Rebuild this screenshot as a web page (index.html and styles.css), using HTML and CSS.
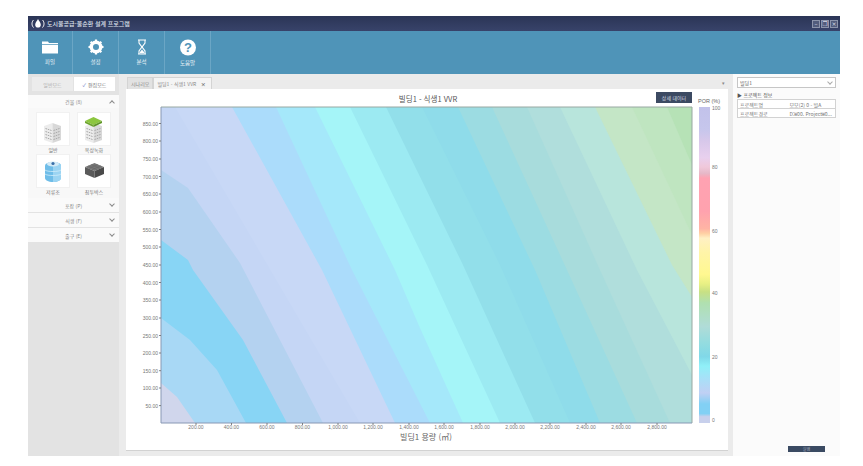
FILE: index.html
```html
<!DOCTYPE html>
<html lang="ko">
<head>
<meta charset="utf-8">
<title>도시물공급-물순환 설계 프로그램</title>
<link rel="stylesheet" href="styles.css">
</head>
<body>
<svg class="defs" width="0" height="0" aria-hidden="true">
  <defs>
    <g id="tower">
      <polygon points="15.500,10 7,13 7,27 15.500,30" fill="#ececec"/>
      <polygon points="15.500,10 24,13 24,27 15.500,30" fill="#d8d8d8"/>
      <g stroke="#ababab" stroke-width="1" stroke-dasharray="1.600 .8" fill="none">
        <path d="M8.500 15.500l6 2M8.500 18.500l6 2M8.500 21.500l6 2M8.500 24.500l6 2"/>
        <path d="M16.500 17.500l6-2M16.500 20.500l6-2M16.500 23.500l6-2M16.500 26.500l6-2"/>
      </g>
    </g>
    <linearGradient id="porScale" x1="0" y1="0" x2="0" y2="1">
      <stop offset="0" stop-color="#c2c2ea"/>
      <stop offset=".07" stop-color="#c6c6ec"/>
      <stop offset=".11" stop-color="#d8c8ea"/>
      <stop offset=".16" stop-color="#e8d0ee"/>
      <stop offset=".19" stop-color="#f0c8da"/>
      <stop offset=".21" stop-color="#e6b8c8"/>
      <stop offset=".225" stop-color="#ffa2b2"/>
      <stop offset=".33" stop-color="#ffa2ae"/>
      <stop offset=".385" stop-color="#ffb4a4"/>
      <stop offset=".4" stop-color="#ffd0a4"/>
      <stop offset=".415" stop-color="#fff0c4"/>
      <stop offset=".46" stop-color="#fff4a8"/>
      <stop offset=".53" stop-color="#fff890"/>
      <stop offset=".56" stop-color="#e8f084"/>
      <stop offset=".585" stop-color="#c8e084"/>
      <stop offset=".62" stop-color="#b0e0b0"/>
      <stop offset=".695" stop-color="#b0dcd8"/>
      <stop offset=".75" stop-color="#92dce0"/>
      <stop offset=".79" stop-color="#80d8e8"/>
      <stop offset=".82" stop-color="#90f0f8"/>
      <stop offset=".86" stop-color="#a8e0f8"/>
      <stop offset=".905" stop-color="#c0d0f4"/>
      <stop offset=".94" stop-color="#82d0f4"/>
      <stop offset=".97" stop-color="#82d0f4"/>
      <stop offset=".98" stop-color="#c8d0ec"/>
      <stop offset="1" stop-color="#c8d0ec"/>
    </linearGradient>
  </defs>
</svg>

<div class="window">
  <header class="titlebar">
    <svg class="logo" width="14" height="11" viewBox="0 0 14 11">
      <path d="M7 1C6 3 4.200 4.500 4.200 6.800A2.800 2.800 0 0 0 9.800 6.800C9.800 4.500 8 3 7 1Z" fill="#fff"/>
      <path d="M2.500 2C.5 4 .5 7.500 2.500 9.500M11.500 2C13.500 4 13.500 7.500 11.500 9.500" fill="none" stroke="#fff" stroke-width="1"/>
    </svg>
    <span class="app-name">도시물공급-물순환 설계 프로그램</span>
    <div class="win-controls">
      <span class="win-btn">–</span><span class="win-btn">❐</span><span class="win-btn">×</span>
    </div>
  </header>

  <nav class="ribbon">
    <div class="rib-btn rib-first">
      <svg width="18" height="16" viewBox="0 0 18 16"><path d="M1 2.500h6l1 1.500h9v1.200H1Z" fill="#fff"/><path d="M1 6h16v8.500H1Z" fill="#fff"/></svg>
      <span>파일</span>
    </div>
    <div class="rib-btn">
      <svg width="18" height="16" viewBox="0 0 18 16"><circle cx="9" cy="8" r="4.800" fill="none" stroke="#fff" stroke-width="3.400"/><path d="M9 8V.3M9 8V15.700M9 8H1.500M9 8H16.500M9 8L3.700 2.700M9 8L14.300 2.700M9 8L3.700 13.300M9 8L14.300 13.300" stroke="#fff" stroke-width="2.200" stroke-dasharray="7.600 9"/><circle cx="9" cy="8" r="3" fill="#4f94b8"/></svg>
      <span>설정</span>
    </div>
    <div class="rib-btn">
      <svg width="18" height="16" viewBox="0 0 18 16"><path d="M5 1h8M5 15h8M6 1.500v2.500l3 4 3-4V1.500M6 14.500V12l3-4 3 4v2.500" fill="none" stroke="#fff" stroke-width="1.100"/><path d="M7 13l2-2.500 2 2.500v1.300H7Z" fill="#fff"/></svg>
      <span>분석</span>
    </div>
    <div class="rib-btn">
      <svg width="18" height="17" viewBox="0 0 18 17"><circle cx="9" cy="8.500" r="8" fill="#fff"/><text x="9" y="13" text-anchor="middle" class="q-mark">?</text></svg>
      <span>도움말</span>
    </div>
  </nav>

  <div class="workspace">
    <aside class="left">
      <div class="mode-tabs">
        <span class="mode mode-off">일반모드</span>
        <span class="mode mode-on"><b class="check">✓</b> 편집모드</span>
      </div>
      <div class="acc-head acc-first"><span>건물 (8)</span><i class="chev chev-up"></i></div>
      <div class="thumbs">
        <figure class="thumb">
          <div class="thumb-box"><svg width="32" height="32" viewBox="0 0 32 32"><use href="#tower"/></svg></div>
          <figcaption>일반</figcaption>
        </figure>
        <figure class="thumb">
          <div class="thumb-box"><svg width="32" height="32" viewBox="0 0 32 32"><use href="#tower"/><polygon points="15.500,4 7,8 15.500,12 24,8" fill="#8cc63f"/><polygon points="7,8 15.500,12 15.500,14 7,10" fill="#6ea52e"/><polygon points="24,8 15.500,12 15.500,14 24,10" fill="#5f9526"/></svg></div>
          <figcaption>옥상녹화</figcaption>
        </figure>
        <figure class="thumb">
          <div class="thumb-box"><svg width="32" height="32" viewBox="0 0 32 32"><path d="M8 11c0-3 4-4 8-4s8 1 8 4v12c0 2-3 4-8 4s-8-2-8-4Z" fill="#6fbde8"/><path d="M16 7c4 0 8 1 8 4v12c0 2-3 4-8 4Z" fill="#9bd4f2"/><path d="M8 15c2 2 14 2 16 0M8 19c2 2 14 2 16 0" fill="none" stroke="#cfecfa" stroke-width=".8"/><ellipse cx="16" cy="9" rx="6" ry="2.500" fill="#d4eaf6"/><circle cx="16" cy="8.500" r="1.600" fill="#3a6fa8"/></svg></div>
          <figcaption>저류조</figcaption>
        </figure>
        <figure class="thumb">
          <div class="thumb-box"><svg width="32" height="32" viewBox="0 0 32 32"><polygon points="16.500,8 7,12 16.500,16 26,12" fill="#777"/><polygon points="7,12 16.500,16 16.500,23 7,19" fill="#5a5a5a"/><polygon points="26,12 16.500,16 16.500,23 26,19" fill="#4a4a4a"/><path d="M10 10.800l9.500 4M13 9.500l9.500 4M23 10.800L13.500 14.800M20 9.500L10.500 13.500" stroke="#636363" stroke-width=".5"/></svg></div>
          <figcaption>침투박스</figcaption>
        </figure>
      </div>
      <div class="acc-head"><span>포장 (P)</span><i class="chev"></i></div>
      <div class="acc-head"><span>식생 (F)</span><i class="chev"></i></div>
      <div class="acc-head"><span>출구 (E)</span><i class="chev"></i></div>
    </aside>

    <main class="center">
      <div class="doc-tabs">
        <span class="doc-tab">시나리오</span>
        <span class="doc-tab doc-tab-on">빌딩1 - 식생1 VVR <b class="close">×</b></span>
        <span class="tab-menu">▾</span>
      </div>
      <section class="pane">
        <button class="detail-btn" type="button">상세 데이터</button>
        <svg class="chart" width="602" height="362" viewBox="126 89 602 362">
          <text class="c-title" x="428" y="102" text-anchor="middle">빌딩1 - 식생1 VVR</text>

          <rect x="161" y="107" width="531" height="316" fill="#d0d6ec"/>
          <polygon fill="#a8d8f5" points="161,383 177,397 195,423 692,423 692,107 161,107"/>
          <polygon fill="#88d5f5" points="161,318 190,340 217,370 246,423 692,423 692,107 161,107"/>
          <polygon fill="#b4d2f0" points="161,240 188,260 193,270 243,340 287,423 692,423 692,107 161,107"/>
          <polygon fill="#c5d6f5" points="161,170 188,188 240,263 323,423 692,423 692,107 161,107"/>
          <polygon fill="#c8d8f6" points="175,107 360,423 692,423 692,107"/>
          <polygon fill="#abdcfb" points="232,107 322,270 395,423 692,423 692,107"/>
          <polygon fill="#a5e8fa" points="276,107 352,270 430,423 692,423 692,107"/>
          <polygon fill="#a5f5f8" points="315,107 395,270 420,328 463,423 692,423 692,107"/>
          <polygon fill="#9ceaf2" points="350,107 427,265 500,423 692,423 692,107"/>
          <polygon fill="#92dfea" points="386,107 463,265 535,423 692,423 692,107"/>
          <polygon fill="#8fdcea" points="422,107 500,265 570,423 692,423 692,107"/>
          <polygon fill="#9cdce2" points="458,107 535,270 600,423 692,423 692,107"/>
          <polygon fill="#a8dcdc" points="492,107 567,270 637,423 692,423 692,107"/>
          <polygon fill="#b0dedc" points="527,107 600,270 670,423 692,423 692,107"/>
          <polygon fill="#b8e5dc" points="560,107 637,270 692,375 692,107"/>
          <polygon fill="#c4e6c6" points="595,107 672,265 692,297 692,107"/>
          <polygon fill="#bfe5c0" points="632,107 692,235 692,107"/>
          <polygon fill="#b6e2b6" points="667,107 692,165 692,107"/>

          <path class="axis-x" d="M161 107H692V423"/>
          <path class="axis-l" d="M161 107V423H692"/>

          <g class="ticks">
            <path d="M159 123.500h2M159 141h2M159 159h2M159 176.500h2M159 194h2M159 212h2M159 229.500h2M159 247h2M159 265h2M159 282.500h2M159 300h2M159 318h2M159 335.500h2M159 353h2M159 370.700h2M159 388h2M159 405.600h2"/>
            <path d="M196 423v2M231.500 423v2M267 423v2M302.500 423v2M338 423v2M373 423v2M409 423v2M444 423v2M480 423v2M515 423v2M550 423v2M586 423v2M621 423v2M657 423v2"/>
          </g>
          <g class="y-labels" text-anchor="end">
            <text x="158" y="125.500">850.00</text><text x="158" y="143">800.00</text><text x="158" y="161">750.00</text><text x="158" y="178.500">700.00</text><text x="158" y="196">650.00</text><text x="158" y="214">600.00</text><text x="158" y="231.500">550.00</text><text x="158" y="249">500.00</text><text x="158" y="267">450.00</text><text x="158" y="284.500">400.00</text><text x="158" y="302">350.00</text><text x="158" y="320">300.00</text><text x="158" y="337.500">250.00</text><text x="158" y="355">200.00</text><text x="158" y="372.700">150.00</text><text x="158" y="390">100.00</text><text x="158" y="407.600">50.00</text>
          </g>
          <g class="x-labels" text-anchor="middle">
            <text x="196" y="429">200.00</text><text x="231.500" y="429">400.00</text><text x="267" y="429">600.00</text><text x="302.500" y="429">800.00</text><text x="338" y="429">1,000.00</text><text x="373" y="429">1,200.00</text><text x="409" y="429">1,400.00</text><text x="444" y="429">1,600.00</text><text x="480" y="429">1,800.00</text><text x="515" y="429">2,000.00</text><text x="550" y="429">2,200.00</text><text x="586" y="429">2,400.00</text><text x="621" y="429">2,600.00</text><text x="657" y="429">2,800.00</text>
          </g>
          <text class="c-axis" x="426" y="440" text-anchor="middle">빌딩1 용량 (㎥)</text>

          <text class="c-por" x="698" y="103">POR (%)</text>
          <rect x="699" y="107" width="11" height="316" fill="url(#porScale)"/>
          <g class="scale-labels">
            <text x="712" y="110">100</text><text x="712" y="169">80</text><text x="712" y="233">60</text><text x="712" y="295">40</text><text x="712" y="359">20</text><text x="712" y="422">0</text>
          </g>
        </svg>
      </section>
    </main>

    <aside class="right">
      <div class="select"><span>빌딩1</span><i class="chev chev-thin"></i></div>
      <div class="info-title">▶ 프로젝트 정보</div>
      <table class="info">
        <tr><td class="k">프로젝트명</td><td>모모(2) 0 - 빌A</td></tr>
        <tr><td class="k">프로젝트경로</td><td>D:₩00. Project₩0...</td></tr>
      </table>
      <button class="run-btn" type="button">실행</button>
    </aside>
  </div>
</div>
</body>
</html>
```

FILE: styles.css
```css
* { box-sizing: border-box; }
html, body { margin: 0; padding: 0; background: #fff; }
body {
  width: 863px;
  height: 466px;
  overflow: hidden;
  padding: 16px 0 0 28px;
  font-family: "Noto Sans CJK KR", "Noto Sans", sans-serif;
  color: #666;
}
.defs { display: block; height: 0; }

.window {
  width: 812px;
  height: 440px;
  display: flex;
  flex-direction: column;
}

.titlebar {
  height: 15px;
  flex: none;
  display: flex;
  align-items: center;
  padding: 0 2px 0 3px;
  background: linear-gradient(#2b3556, #38436a);
  color: #dfe3ec;
}
.logo { flex: none; margin-right: 2px; }
.app-name { font-size: 6px; line-height: 1; font-weight: 500; }
.win-controls { margin-left: auto; display: flex; gap: 1px; }
.win-btn {
  width: 8px;
  height: 8px;
  border: 1px solid #8c94ab;
  background: #525c7c;
  color: #d8dbe6;
  font-size: 6px;
  line-height: 6px;
  text-align: center;
  overflow: hidden;
  font-family: "DejaVu Sans", sans-serif;
}

.ribbon {
  height: 43px;
  flex: none;
  display: flex;
  background: #4f94b8;
}
.rib-btn {
  width: 46px;
  flex: none;
  display: flex;
  flex-direction: column;
  align-items: center;
  padding-top: 8px;
  gap: 3px;
  border-right: 1px solid #6ba6c5;
  color: #e8f1f6;
  font-size: 5.500px;
  line-height: 9px;
}
.rib-first { width: 45px; }
.q-mark { font: 700 13px "Liberation Sans", sans-serif; fill: #4f94b8; }

.workspace {
  flex: 1;
  min-height: 0;
  display: flex;
}

.left {
  width: 91px;
  flex: none;
  background: #e3e3e3;
  padding-top: 3px;
  display: flex;
  flex-direction: column;
  font-size: 5px;
}
.mode-tabs {
  display: flex;
  height: 14px;
  margin: 0 4px 4px;
  gap: 1px;
}
.mode {
  flex: 1;
  display: flex;
  align-items: center;
  justify-content: center;
  gap: 2px;
  line-height: 1;
}
.mode-off { background: #ececec; color: #b0b0b0; }
.mode-on { background: #fff; color: #777; }
.check { color: #5a70b8; font-weight: 400; }

.acc-head {
  height: 14px;
  flex: none;
  margin-bottom: 1px;
  background: #fafafa;
  display: flex;
  align-items: center;
  justify-content: center;
  position: relative;
  color: #888;
  line-height: 1;
}
.acc-first { height: 13px; margin-bottom: 0; }
.chev {
  position: absolute;
  right: 5px;
  top: 50%;
  width: 4px;
  height: 4px;
  margin-top: -3px;
  border-right: 1px solid #8a8a8a;
  border-bottom: 1px solid #8a8a8a;
  transform: rotate(45deg);
}
.chev-up { margin-top: -1px; transform: rotate(225deg); }
.chev-thin { border-color: #aaa; right: 3px; }

.thumbs {
  display: grid;
  grid-template-columns: 32px 32px;
  column-gap: 9px;
  padding: 5px 0 0 9px;
  height: 90px;
  align-content: start;
  background: #f8f8f8;
  margin-bottom: 0;
}
.thumb { margin: 0; }
.thumb-box {
  width: 32px;
  height: 32px;
  background: #fff;
  box-shadow: 0 0 0 1px #f1f1f1;
}
.thumb-box svg { display: block; }
.thumb figcaption {
  height: 10px;
  text-align: center;
  line-height: 10px;
  color: #777;
  white-space: nowrap;
}

.center {
  width: 614px;
  flex: none;
  background: #ebebeb;
  padding: 3px 5px 5px 7px;
  display: flex;
  flex-direction: column;
}
.doc-tabs {
  height: 12px;
  flex: none;
  display: flex;
  align-items: stretch;
  padding-left: 1px;
  font-size: 5px;
  line-height: 11px;
}
.doc-tab {
  padding: 0 3px;
  background: #e2e2e2;
  border: 1px solid #d4d4d4;
  border-bottom: 0;
  color: #888;
  white-space: nowrap;
}
.doc-tab-on { width: 59px; background: #f4f4f4; }
.close { margin-left: 3px; color: #666; }
.tab-menu { margin-left: auto; margin-right: 3px; color: #888; }

.pane {
  flex: 1;
  min-height: 0;
  background: #fff;
  position: relative;
  border-bottom: 1px solid #d2d2d2;
}
.chart { display: block; }
.detail-btn {
  position: absolute;
  left: 530px;
  top: 3px;
  width: 36px;
  height: 11px;
  padding: 0;
  border: 0;
  background: #3c4a62;
  color: #d6dae2;
  font: 5px/11px "Noto Sans CJK KR", sans-serif;
}

.c-title { font: 400 7.500px "Noto Sans CJK KR", sans-serif; fill: #555; }
.c-axis { font: 8px "Noto Sans CJK KR", sans-serif; fill: #666; }
.c-por { font: 5.500px "Liberation Sans", sans-serif; fill: #666; }
.axis-x { fill: none; stroke: #98a8a2; stroke-width: 1; }
.axis-l { fill: none; stroke: #8898b4; stroke-width: 1; }
.ticks path { stroke: #666; stroke-width: .8; fill: none; }
.y-labels text, .x-labels text, .scale-labels text {
  font: 5px "Liberation Sans", sans-serif;
  fill: #777;
}

.right {
  width: 107px;
  flex: none;
  background: #fbfbfb;
  padding: 3px 4px 4px 4px;
  display: flex;
  flex-direction: column;
  font-size: 5px;
}
.select {
  height: 11px;
  width: 99px;
  flex: none;
  position: relative;
  background: #fff;
  border: 1px solid #c6c6c6;
  padding-left: 2px;
  line-height: 9px;
  color: #666;
}
.info-title {
  margin-top: 3px;
  height: 8px;
  line-height: 8px;
  font-weight: 400;
  color: #555;
}
.info {
  width: 99px;
  border-collapse: collapse;
  table-layout: fixed;
  background: #fff;
  color: #777;
}
.info td {
  height: 9px;
  padding: 0 0 0 2px;
  border: 1px solid #d2d2d2;
  line-height: 7px;
  white-space: nowrap;
  overflow: hidden;
}
.info .k { width: 50px; border-right: 0; }
.info td + td { border-left: 0; }
.run-btn {
  margin-top: auto;
  align-self: flex-end;
  margin-right: 11px;
  width: 37px;
  height: 6px;
  padding: 0;
  border: 0;
  background: #3a4a62;
  color: #aab2c0;
  font: 4px/4px "Noto Sans CJK KR", sans-serif;
  overflow: hidden;
}
```
